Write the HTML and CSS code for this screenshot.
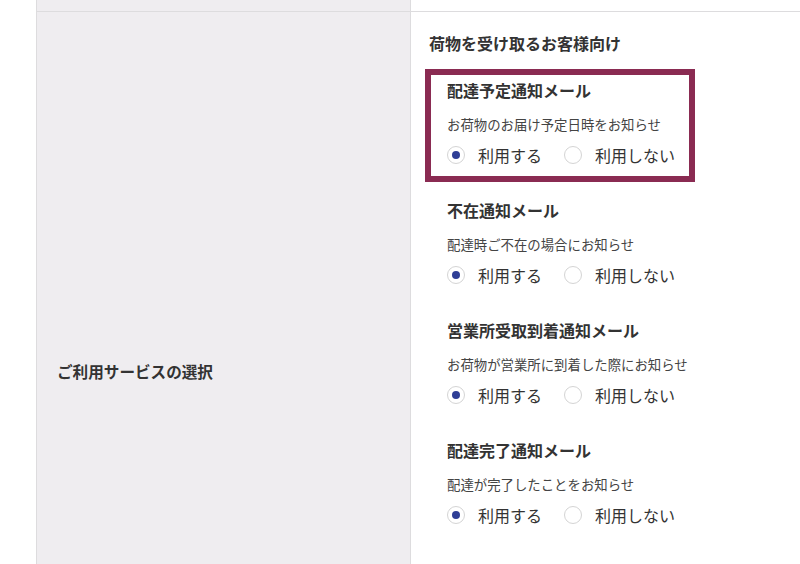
FILE: index.html
```html
<!DOCTYPE html>
<html lang="ja">
<head>
<meta charset="utf-8">
<link rel="stylesheet" href="styles.css">
</head>
<body>
<div class="table">
  <div class="row row-top">
    <div class="cell-head"></div>
    <div class="cell-body"></div>
  </div>
  <div class="row">
    <div class="cell-head"><span class="head-label">ご利用サービスの選択</span></div>
    <div class="cell-body main">
      <h2 class="group-title">荷物を受け取るお客様向け</h2>
      <div class="item highlighted">
        <h3 class="item-title">配達予定通知メール</h3>
        <p class="item-desc">お荷物のお届け予定日時をお知らせ</p>
        <div class="choices">
          <label class="choice"><span class="radio checked"></span><span class="choice-text">利用する</span></label>
          <label class="choice"><span class="radio"></span><span class="choice-text">利用しない</span></label>
        </div>
      </div>
      <div class="item">
        <h3 class="item-title">不在通知メール</h3>
        <p class="item-desc">配達時ご不在の場合にお知らせ</p>
        <div class="choices">
          <label class="choice"><span class="radio checked"></span><span class="choice-text">利用する</span></label>
          <label class="choice"><span class="radio"></span><span class="choice-text">利用しない</span></label>
        </div>
      </div>
      <div class="item">
        <h3 class="item-title">営業所受取到着通知メール</h3>
        <p class="item-desc">お荷物が営業所に到着した際にお知らせ</p>
        <div class="choices">
          <label class="choice"><span class="radio checked"></span><span class="choice-text">利用する</span></label>
          <label class="choice"><span class="radio"></span><span class="choice-text">利用しない</span></label>
        </div>
      </div>
      <div class="item">
        <h3 class="item-title">配達完了通知メール</h3>
        <p class="item-desc">配達が完了したことをお知らせ</p>
        <div class="choices">
          <label class="choice"><span class="radio checked"></span><span class="choice-text">利用する</span></label>
          <label class="choice"><span class="radio"></span><span class="choice-text">利用しない</span></label>
        </div>
      </div>
    </div>
  </div>
</div>
</body>
</html>
```
FILE: styles.css
```css
html, body {
  margin: 0;
  padding: 0;
  background: #ffffff;
  overflow: hidden;
}
body {
  font-family: "Noto Sans CJK JP", "Noto Sans", sans-serif;
  color: #333333;
}
.table {
  margin-left: 36px;
  width: 764px;
}
.row {
  display: flex;
  border-bottom: 1px solid #dddcde;
}
.row-top .cell-head,
.row-top .cell-body {
  height: 11px;
}
.cell-head {
  width: 375px;
  flex: none;
  background: #efedf0;
  border-left: 1px solid #dddcde;
  border-right: 1px solid #dddcde;
  display: flex;
  align-items: center;
  padding-left: 20px;
  box-sizing: border-box;
}
.cell-body {
  flex: 1;
  background: #ffffff;
}
.head-label {
  font-size: 15.6px;
  font-weight: bold;
  color: #333333;
}
.main {
  padding: 19px 0 181px 18px;
}
.group-title {
  margin: 0 0 14px;
  font-size: 16px;
  line-height: 24px;
  font-weight: bold;
  color: #333333;
}
.item {
  width: 270px;
  box-sizing: border-box;
  margin: 0 0 7px -4px;
  border: 6px solid transparent;
  padding: 3px 0 9px 16px;
}
.item.highlighted {
  border-color: #8a2b52;
}
.item-title {
  margin: 0;
  font-size: 16px;
  line-height: 24px;
  font-weight: bold;
  color: #333333;
}
.item-desc {
  margin: 12px 0 0;
  font-size: 13.4px;
  line-height: 20px;
  color: #444444;
}
.choices {
  margin-top: 9px;
  display: flex;
  align-items: center;
  height: 24px;
}
.choice {
  display: flex;
  align-items: center;
  font-size: 16px;
  color: #333333;
}
.choice + .choice {
  margin-left: 22px;
}
.radio {
  width: 18px;
  height: 18px;
  box-sizing: border-box;
  border: 1px solid #d4d4d4;
  border-radius: 50%;
  background: #ffffff;
  display: flex;
  align-items: center;
  justify-content: center;
  margin-right: 13px;
}
.radio.checked::after {
  content: "";
  width: 8px;
  height: 8px;
  border-radius: 50%;
  background: #2f3e96;
}
.choice-text {
  line-height: 24px;
}
```
